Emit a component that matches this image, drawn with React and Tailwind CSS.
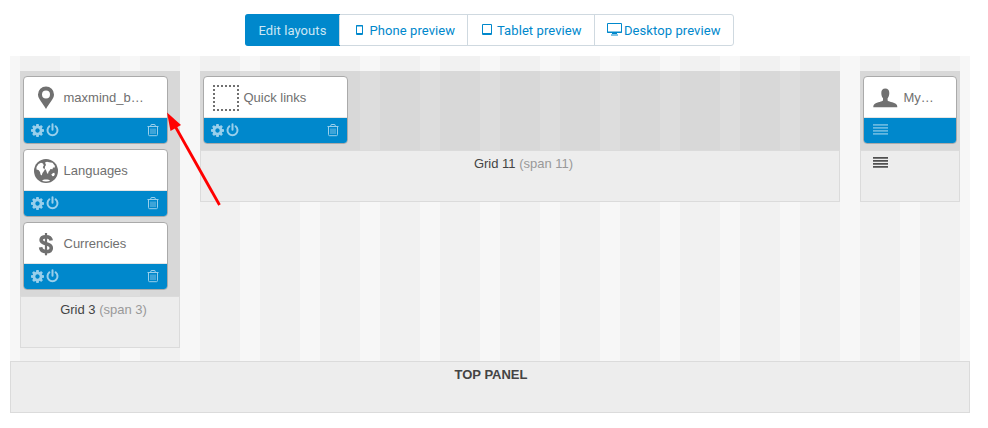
import React from "react";

const Gear = () => (
  <svg width="13" height="13" viewBox="0 0 1536 1536" fill="currentColor">
    <path d="M1024 768q0-106-75-181t-181-75-181 75-75 181 75 181 181 75 181-75 75-181zm512-109v222q0 12-8 23t-20 13l-185 28q-19 54-39 91 35 50 107 138 10 12 10 25t-9 23q-27 37-99 108t-94 71q-12 0-26-9l-138-108q-44 23-91 38-16 136-29 186-7 28-36 28H657q-14 0-24.500-8.500T621 1506l-28-184q-49-16-90-37l-141 107q-10 9-25 9-14 0-25-11-126-114-165-168-7-10-7-23 0-12 8-23 15-21 51-66.500t54-70.500q-27-50-41-99L29 913q-13-2-21-12.500T0 877V655q0-12 8-23t19-13l186-28q14-46 39-92-40-57-107-138-10-12-10-24 0-10 9-23 26-36 98.500-107.500T337 135q13 0 26 10l138 107q44-23 91-38 16-136 29-186 7-28 36-28h222q14 0 24.500 8.500T915 30l28 184q49 16 90 37l142-107q9-9 24-9 13 0 25 10 129 119 165 170 7 8 7 22 0 12-8 23-15 21-51 66.500t-54 70.500q26 50 41 98l183 28q13 2 21 12.500t8 23.500z" />
  </svg>
);
const Power = () => (
  <svg width="13" height="14" viewBox="0 0 13 14" fill="none" stroke="currentColor" strokeWidth="2" strokeLinecap="round">
    <path d="M3.400 3.300a5 5 0 1 0 6.200 0M6.500 1.300v5.500" />
  </svg>
);
const Trash = () => (
  <svg width="12" height="14" viewBox="0 0 12 14" fill="none" stroke="currentColor">
    <path d="M.5 3.500h11M3.500 3.500l.7-2h3.600l.7 2M1.500 3.500v8q0 1.200 1 1.200h7q1 0 1-1.200v-8" />
    <path strokeWidth=".8" d="M4 5.500v5.500M6 5.500v5.500M8 5.500v5.500" />
  </svg>
);
const Lines = ({ className }) => (
  <svg className={className} width="15" height="11" viewBox="0 0 15 11" fill="currentColor">
    <path d="M0 0h15v1.800H0zM0 3h15v1.800H0zM0 6h15v1.800H0zM0 9h15v1.800H0z" />
  </svg>
);
const Pin = () => (
  <svg width="26" height="26" viewBox="0 0 26 26" fill="currentColor">
    <path fillRule="evenodd" d="M13 1.500a8 8 0 0 0-8 8c0 4.500 4.500 8 8 14.500C16.500 17.500 21 14 21 9.500a8 8 0 0 0-8-8zm0 4a4 4 0 1 1 0 8 4 4 0 0 1 0-8z" />
  </svg>
);
const Globe = () => (
  <svg width="26" height="26" viewBox="0 0 26 26">
    <circle cx="13" cy="13" r="12" fill="currentColor" />
    <path fill="#fff" d="M3.500 9 5.500 6 8 4.700l2 .8.8 2-1 1.500.7 1.500 1.500.5-1 2-1.500 2-.8 2.500-1.200-1-.5-2.500L5.500 12l-2-.5zM12 4.500l2-.7 2 .4 3.500.6L22 8l-.5 1.800-1.500-.3-.5 1.800-2-.3-1 1.800-1 1-.5 2.200-1-1-.8-2.500-1.400-2 .2-2 1-1.500zM18.300 16.500l1.800-1.500 1.200-.3.500 1.500-.8 1.800-1.500.2zM9 22.300l2.500-.8 3 .1 2.800.7-1.800 1-2.500.3-2.500-.4z" />
  </svg>
);
const Dollar = () => (
  <svg width="26" height="26" viewBox="0 0 26 26" fill="none" stroke="currentColor">
    <path strokeWidth="3.600" d="M18.200 9.500C17.800 7 16 5.700 13 5.700c-3 0-4.900 1.200-4.900 3.400 0 5 10.200 2.400 10.200 7.800 0 2.400-2 3.700-5.200 3.700s-5.200-1.500-5.500-4.300" />
    <path strokeWidth="2.200" d="M13 2v22.300" />
  </svg>
);
const Dotted = () => (
  <svg width="26" height="26" viewBox="0 0 26 26" fill="none" stroke="currentColor" strokeWidth="2">
    <path strokeDasharray="2 2" d="M0 1h26M0 25h26M1 0v26M25 0v26" />
  </svg>
);
const User = () => (
  <svg width="26" height="26" viewBox="0 0 26 26" fill="currentColor">
    <path d="M12.300 3.500c-2.600 0-4 1.600-4 4.500 0 2.300.6 4 1.700 5.200v2.300c-.2 1-6 1.800-8.100 3.300C.6 19.700.3 21 .3 22.200h24c0-1.200-.3-2.500-1.600-3.400-2.100-1.500-7.900-2.300-8.100-3.300v-2.300c1.100-1.200 1.700-2.900 1.700-5.200 0-2.900-1.400-4.500-4-4.500z" />
  </svg>
);

function Card({ icon, title, small }) {
  return (
    <div className={`mx-[3px] mb-[5px] h-[68px] overflow-hidden rounded-[4px] border border-[#aaa] bg-white ${small ? "w-[94px]" : "w-[145px]"}`}>
      <div className="flex h-[41px] items-center border-b border-[#e5e5e5] pt-[2px] pl-[9px] text-[#707070]">
        {icon}
        <span className="ml-[4.500px] text-[13px] leading-5">{title}</span>
      </div>
      <div className="flex h-[25px] items-center bg-[#0088cc] pr-2 pl-[7px] text-[#99cfeb]">
        {small ? <Lines className="-mt-[3px] ml-[2px] text-[#66b8e0]" /> : (
          <>
            <Gear />
            <span className="-mt-px ml-[2px]"><Power /></span>
            <span className="-mt-px ml-auto"><Trash /></span>
          </>
        )}
      </div>
    </div>
  );
}

function Grid({ children, footer, className }) {
  return (
    <div className={className}>
      <div className="bg-black/10 pt-[5px] pb-px">{children}</div>
      <div className="h-[52px] border border-[#dbdbdb] bg-[#ededed] pt-[3px] text-center text-[13px] leading-5 text-[#444]">{footer}</div>
    </div>
  );
}

const Span = ({ children }) => <span className="text-[#999]">{children}</span>;

export default function App() {
  const tab = "flex items-center border-l border-[#cfd9e0] pt-px text-[#0088cc]";
  return (
    <div className="relative h-[428px] w-[988px] overflow-hidden bg-white font-['Liberation_Sans',Arial,sans-serif]">
      <div className="ml-[245px] pt-[14px]">
        <div className="flex h-8 w-[489px] rounded-[3px] border border-[#cfd9e0] font-[Roboto,sans-serif] text-[13px] tracking-[0.080px]">
          <div className="-my-px -ml-px flex w-[95px] items-center rounded-l-[3px] bg-[#0088cc] pt-px pl-[13.500px] text-[#cce7f5]">Edit layouts</div>
          <div className={`${tab} -ml-px w-[128px] pl-[16px]`}>
            <svg className="-mt-[2px]" width="7" height="10" viewBox="0 0 7 10" fill="none" stroke="currentColor"><path d="M.5.5h6v9h-6zM0 1h7M0 8.500h7" /></svg>
            <span className="ml-[6.500px]">Phone preview</span>
          </div>
          <div className={`${tab} w-[127px] pl-[14px]`}>
            <svg className="-mt-[2px]" width="10" height="11" viewBox="0 0 10 11" fill="none" stroke="currentColor"><path d="M.5.5h9v10h-9zM1 9.500h8" /></svg>
            <span className="ml-[5px]">Tablet preview</span>
          </div>
          <div className={`${tab} flex-1 pl-[12px]`}>
            <svg className="-mt-[3px]" width="15" height="13" viewBox="0 0 15 13" fill="none" stroke="currentColor"><path d="M.5.5h14v9H.5zM0 9h15M5 10.500h5M4 12h7" /></svg>
            <span className="ml-[2px]">Desktop preview</span>
          </div>
        </div>
      </div>
      <div className="mt-[10px] ml-[10px] flex h-[305px] w-[960px] items-start bg-[repeating-linear-gradient(90deg,#f7f7f7_0px,#f7f7f7_10px,#f1f1f1_10px,#f1f1f1_50px,#f7f7f7_50px,#f7f7f7_60px)] px-[10px] pt-[15px]">
        <Grid className="w-[160px]" footer={<span className="pl-[7px]">Grid 3 <Span>(span 3)</Span></span>}>
          <Card icon={<Pin />} title="maxmind_b…" />
          <Card icon={<Globe />} title="Languages" />
          <Card icon={<Dollar />} title="Currencies" />
        </Grid>
        <Grid className="ml-5 w-[640px]" footer={<span className="pl-[7px]">Grid 11 <Span>(span 11)</Span></span>}>
          <Card icon={<Dotted />} title="Quick links" />
        </Grid>
        <Grid className="ml-5 w-[100px]" footer={<Lines className="mt-[3px] ml-[12px] text-[#505050]" />}>
          <Card small icon={<User />} title="My…" />
        </Grid>
      </div>
      <div className="ml-[10px] h-[52px] w-[960px] border border-[#dbdbdb] bg-[#ededed] pt-[3px] pl-[2px] text-center text-[13px] leading-5 font-bold text-[#444]">TOP PANEL</div>
      <svg className="absolute top-[105px] left-[160px]" width="70" height="110" viewBox="160 105 70 110">
        <path d="M219.500 205 175 126" stroke="#f00" strokeWidth="2.800" />
        <path d="M167 112.500 181 125 170.500 131z" fill="#f00" />
      </svg>
    </div>
  );
}
